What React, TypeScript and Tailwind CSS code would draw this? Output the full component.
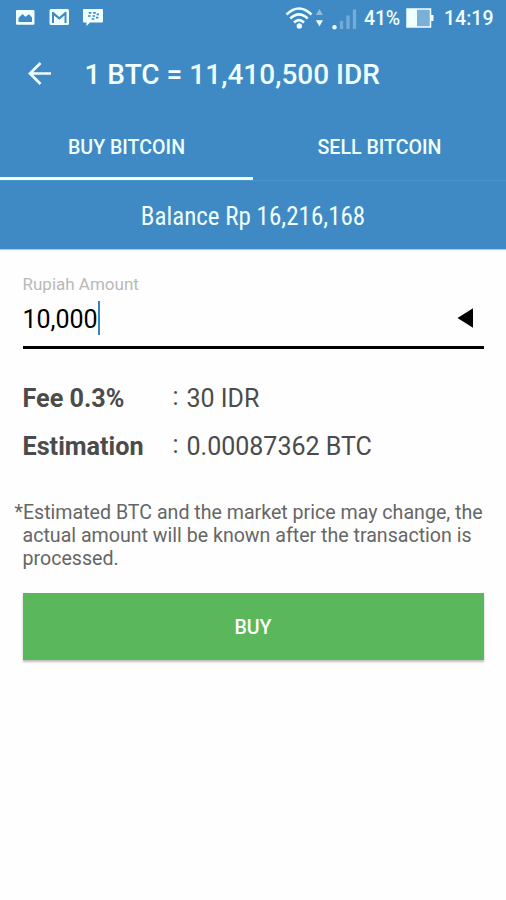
import type { ReactNode } from "react";

function StatusBar() {
  return (
    <div className="flex h-9 items-start justify-between text-[#f0ffff]">
      <svg width="130" height="36" viewBox="0 0 130 36" fill="currentColor" aria-hidden="true">
        <path fillRule="evenodd" d="M17 10h16.500q1 0 1 1v12.700q0 1-1 1H17q-1 0-1-1V11q0-1 1-1ZM18.500 22h13.500v-4.500l-3-3.200-3.500 2.500-3-2.800-4 4Z" />
        <path fillRule="evenodd" d="M51 9h16.500q1.500 0 1.500 1.500v13q0 1.500-1.500 1.500H51q-1.500 0-1.500-1.500v-13Q49.500 9 51 9ZM52 12v11h2v-7.500l5.300 4.200 5.200-4.200V23h2V12h-1.500l-5.700 4.900L53.500 12Z" />
        <path d="M84 9h18q1 0 1 1v11.500q0 1-1 1H90L86.500 26v-3.500H84q-1 0-1-1V10q0-1 1-1Z" />
        <g stroke="#3f8ac4" strokeWidth="1.700">
          <path d="M88.700 12.900h2.600M93.200 12.900h2.600M88 16h2.600M92.500 16h2.600M96.600 14.400h2.400M91.700 19h2.600M96 17.600h2.400" />
        </g>
      </svg>
      <div className="flex items-start">
        <svg width="81" height="36" viewBox="0 0 81 36" fill="none" aria-hidden="true">
          <g stroke="currentColor" strokeWidth="2.500">
            <path d="M3.500 14.500Q16 2.500 28.500 14.500" />
            <path d="M7.300 18.500Q16 10.200 24.700 18.500" />
            <path d="M11 22.500Q16 17.700 21 22.500" />
          </g>
          <circle cx="16.300" cy="26" r="2.700" fill="currentColor" />
          <path d="M36.400 9l3.500 6h-7Z" fill="#8fbde0" />
          <path d="M36.400 26.500l3.500-6.300h-7Z" fill="currentColor" />
          <circle cx="51.500" cy="27.200" r="2.200" fill="currentColor" />
          <path d="M58.500 21v8M65 15.500v13.500M71.500 9.500v19.500" stroke="#74acd8" strokeWidth="3.300" />
        </svg>
        <span className="mt-[7px] w-[42px] text-[19.500px] leading-6 font-medium tracking-[-.2px]">41%</span>
        <svg width="32" height="36" viewBox="0 0 32 36" aria-hidden="true">
          <rect x="1" y="9" width="23.500" height="18" fill="#7aafd8" stroke="currentColor" strokeWidth="1.500" />
          <path d="M1 9h10v18H1ZM25 15h2.500v6H25Z" fill="currentColor" />
        </svg>
        <span className="mt-[7px] w-[68px] pl-[6px] text-[19.500px] leading-6 font-medium">14:19</span>
      </div>
    </div>
  );
}

function Tab({ active = false, children }: { active?: boolean; children: ReactNode }) {
  return (
    <button className={`flex h-full w-1/2 items-center justify-center border-b-[3px] pt-[7px] text-[19.600px] font-medium ${active ? "border-[#f0ffff]" : "border-transparent"}`}>
      {children}
    </button>
  );
}

function Detail({ label, value }: { label: string; value: string }) {
  return (
    <div className="flex h-12 items-center text-[25px] text-[#4b4b4b]">
      <dt className="w-[149px] text-[25.200px] font-bold">{label}</dt>
      <dd className="flex"><span className="w-[15px] translate-x-px -translate-y-0.5">:</span><span>{value}</span></dd>
    </div>
  );
}

export default function App() {
  return (
    <main className="flex h-[900px] w-[506px] flex-col bg-[#fefefe] font-['Roboto',sans-serif]">
      <header className="bg-[#3f8ac4] text-[#f0ffff]">
        <StatusBar />
        <div className="flex h-[76px] items-center">
          <svg className="ml-7" width="24" height="24" viewBox="0 0 24 24" fill="none" stroke="currentColor" strokeWidth="2.700" aria-hidden="true">
            <path d="M23 11.500H2M12.500 1 2 11.500l10.500 10.500" />
          </svg>
          <h1 className="ml-[32.500px] pt-0.5 text-[28px] font-medium whitespace-nowrap">1 BTC = 11,410,500 IDR</h1>
        </div>
        <nav className="flex h-[68px]">
          <Tab active>BUY BITCOIN</Tab>
          <Tab>SELL BITCOIN</Tab>
        </nav>
      </header>
      <section className="flex h-[69px] items-center justify-center border-t border-[#4b94cc] bg-[#3f8ac4] pt-1 text-[25px] text-[#f0ffff] shadow-[0_1px_1px_#a9d0ea] [font-family:'Roboto_Condensed','Roboto',sans-serif] [font-stretch:75%]">
        Balance Rp 16,216,168
      </section>
      <section className="px-[22.500px] pt-6">
        <label className="block h-[22px] text-[17px] leading-[22px] text-[#b9b9b9]">Rupiah Amount</label>
        <div className="flex h-[54px] items-start justify-between border-b-[3px] border-black pt-[6px] text-[25px] leading-9 text-black">
          <div className="flex items-start"><span className="pt-px">10,000</span><i className="h-[34px] w-[2.500px] bg-[#3f82bb]" /></div>
          <svg className="mt-[7px] mr-[11px]" width="16" height="20" viewBox="0 0 16 20" aria-hidden="true"><path d="M.500 10 16 .300v19.400Z" /></svg>
        </div>
        <dl className="mt-[26px]">
          <Detail label="Fee 0.3%" value="30 IDR" />
          <Detail label="Estimation" value="0.00087362 BTC" />
        </dl>
        <p className="mt-[30px] h-[69px] indent-[-8px] text-[19.600px] leading-[23px] whitespace-nowrap text-[#666]">
          *Estimated BTC and the market price may change, the<br />actual amount will be known after the transaction is<br />processed.
        </p>
        <button className="mt-[23px] flex h-[67px] w-full items-center justify-center bg-[#5ab75b] pt-[3px] text-[19.600px] font-medium text-white shadow-[0_2px_2px_#bcbcbc]">BUY</button>
      </section>
    </main>
  );
}
